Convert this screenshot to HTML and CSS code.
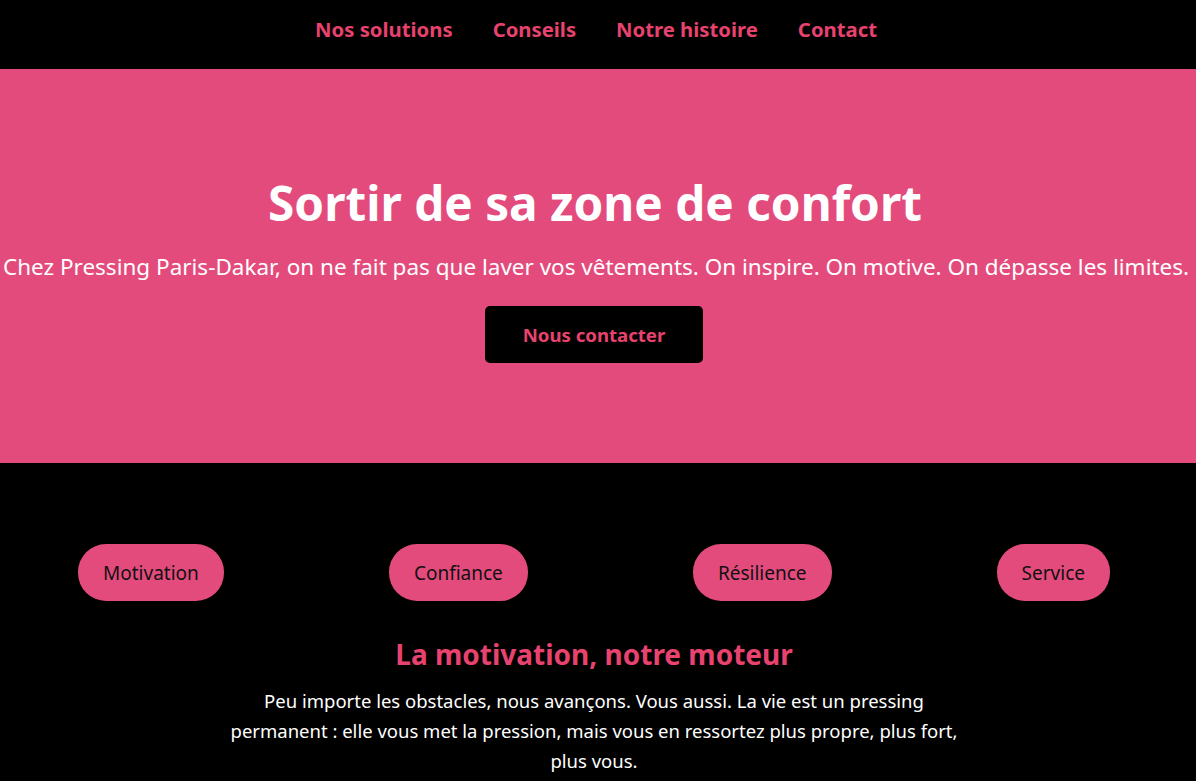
FILE: index.html
```html
<!DOCTYPE html>
<html lang="fr">
<head>
<meta charset="utf-8">
<title>Pressing Paris-Dakar</title>
<link rel="stylesheet" href="styles.css">
</head>
<body>
<header class="topbar">
  <nav class="nav">
    <a href="#" class="nav-link">Nos solutions</a>
    <a href="#" class="nav-link">Conseils</a>
    <a href="#" class="nav-link">Notre histoire</a>
    <a href="#" class="nav-link">Contact</a>
  </nav>
</header>
<section class="hero">
  <h1 class="hero-title">Sortir de sa zone de confort</h1>
  <p class="hero-text">Chez Pressing Paris-Dakar, on ne fait pas que laver vos vêtements. On inspire. On motive. On dépasse les limites.</p>
  <a href="#" class="hero-btn">Nous contacter</a>
</section>
<section class="values">
  <div class="pills">
    <button class="pill">Motivation</button>
    <button class="pill">Confiance</button>
    <button class="pill">Résilience</button>
    <button class="pill">Service</button>
  </div>
  <div class="value-content">
    <h2 class="value-title">La motivation, notre moteur</h2>
    <p class="value-text">Peu importe les obstacles, nous avançons. Vous aussi. La vie est un pressing permanent : elle vous met la pression, mais vous en ressortez plus propre, plus fort, plus vous.</p>
  </div>
</section>
</body>
</html>
```
FILE: styles.css
```css
* { box-sizing: border-box; }
html, body { margin: 0; padding: 0; background: #000; }
body {
  font-family: "Segoe UI", "Noto Sans", "Open Sans", sans-serif;
  color: #fff;
}
.topbar {
  background: #000;
  height: 69px;
  display: flex;
  align-items: center;
  justify-content: center;
}
.nav {
  display: flex;
  gap: 40px;
  padding-bottom: 12px;
  padding-right: 4px;
}
.nav-link {
  color: #e8426f;
  font-weight: 700;
  font-size: 20.3px;
  text-decoration: none;
}
.hero {
  background: #e44b7d;
  height: 394px;
  display: flex;
  flex-direction: column;
  align-items: center;
  padding-top: 102px;
  text-align: center;
}
.hero-title {
  margin: 0;
  font-size: 47.7px;
  font-weight: 700;
  line-height: 64px;
  color: #fff;
  padding-right: 6px;
}
.hero-text {
  margin: 15px 0 0;
  font-size: 22.5px;
  line-height: 34px;
  white-space: nowrap;
  padding-right: 4px;
}
.hero-btn {
  margin-top: 22px;
  display: flex;
  align-items: center;
  justify-content: center;
  width: 218px;
  height: 57px;
  background: #000;
  color: #e8426f;
  border-radius: 5px;
  font-weight: 700;
  font-size: 18.6px;
  text-decoration: none;
  margin-right: 8px;
}
.values {
  padding-top: 81px;
  padding-bottom: 20px;
}
.pills {
  display: flex;
  justify-content: space-between;
  padding: 0 86px 0 78px;
}
.pill {
  background: #e44b7d;
  border: none;
  border-radius: 28px;
  height: 57px;
  padding: 0 25px;
  font-family: inherit;
  font-size: 19px;
  color: #111;
}
.value-content {
  width: 740px;
  margin: 0 auto;
  text-align: center;
  padding-top: 33px;
  position: relative;
  left: -4px;
}
.value-title {
  margin: 0;
  color: #e8426f;
  font-size: 28px;
  font-weight: 700;
  line-height: 40px;
}
.value-text {
  margin: 12px 0 0;
  font-size: 18.5px;
  line-height: 30px;
}
```
